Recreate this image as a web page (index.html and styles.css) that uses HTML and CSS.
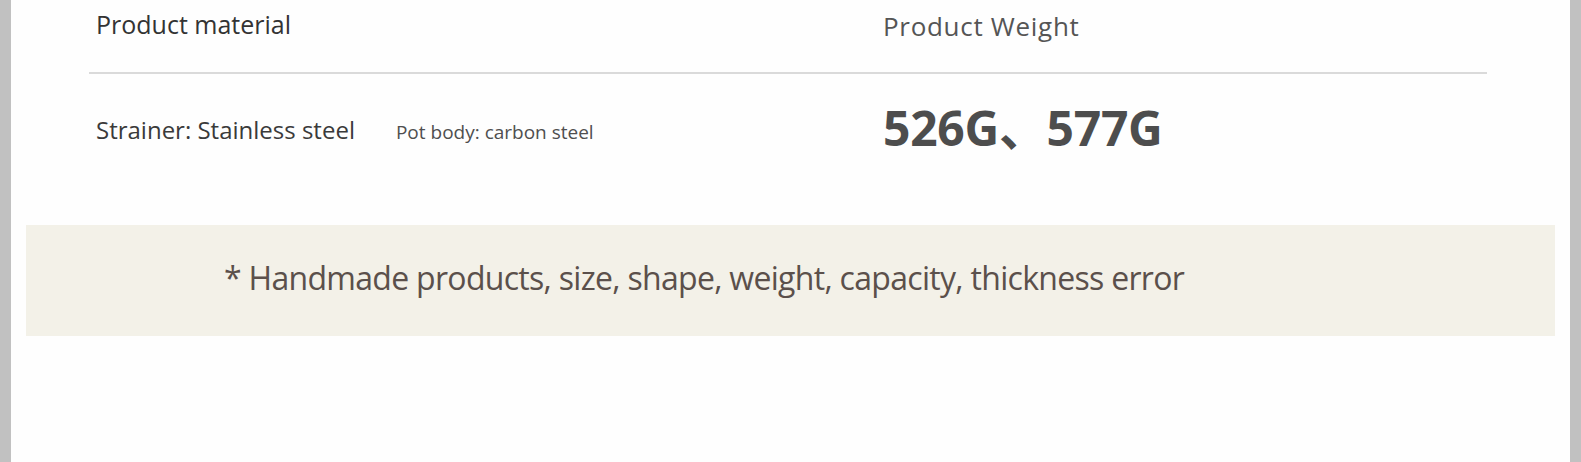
FILE: index.html
```html
<!DOCTYPE html>
<html>
<head>
<meta charset="utf-8">
<link rel="stylesheet" href="styles.css">
</head>
<body>
<div class="page">
  <div class="edge"></div>
  <main class="main">
    <section class="spec">
      <div class="spec-row spec-head">
        <div class="cell label">Product material</div>
        <div class="cell label label-weight">Product Weight</div>
      </div>
      <div class="spec-row spec-body">
        <div class="cell materials">
          <span class="mat-main">Strainer: Stainless steel</span>
          <span class="mat-sub">Pot body: carbon steel</span>
        </div>
        <div class="cell weight">526G、577G</div>
      </div>
    </section>
    <div class="note">* Handmade products, size, shape, weight, capacity, thickness error</div>
  </main>
  <div class="edge"></div>
</div>
</body>
</html>
```
FILE: styles.css
```css
html, body {
  margin: 0;
  padding: 0;
  background: #fefefe;
}
.page {
  display: flex;
  height: 462px;
  font-family: "Open Sans", "Noto Sans", "Noto Sans CJK SC", sans-serif;
}
.edge {
  width: 11px;
  flex: none;
  background: #c1c1c1;
}
.main {
  flex: 1;
  background: #fefefe;
}
.spec {
  margin-left: 78px;
  width: 1398px;
}
.spec-row {
  display: grid;
  grid-template-columns: 787px 1fr;
  padding-left: 7px;
}
.spec-head {
  height: 72px;
  border-bottom: 2px solid #dadada;
}
.label {
  font-size: 25px;
  color: #333;
  padding-top: 9px;
  line-height: 30px;
}
.label-weight {
  font-size: 26px;
  letter-spacing: 0.7px;
  color: #555;
  padding-top: 11px;
}
.spec-body {
  height: 110px;
  align-items: start;
}
.materials {
  display: flex;
  align-items: baseline;
  gap: 41px;
  padding-top: 39px;
}
.mat-main {
  font-size: 24px;
  color: #3a3a3a;
}
.mat-sub {
  font-size: 19px;
  color: #4f4f4f;
}
.weight {
  font-size: 48px;
  font-weight: 700;
  color: #4d4d4d;
  padding-top: 24px;
  line-height: 60px;
  letter-spacing: -0.3px;
}
.note {
  margin-top: 41px;
  margin-left: 15px;
  width: 1529px;
  height: 111px;
  box-sizing: border-box;
  background: #f3f1e8;
  padding-left: 198px;
  padding-top: 31px;
  font-size: 32px;
  letter-spacing: -0.7px;
  line-height: 44px;
  color: #5b504b;
}
```
